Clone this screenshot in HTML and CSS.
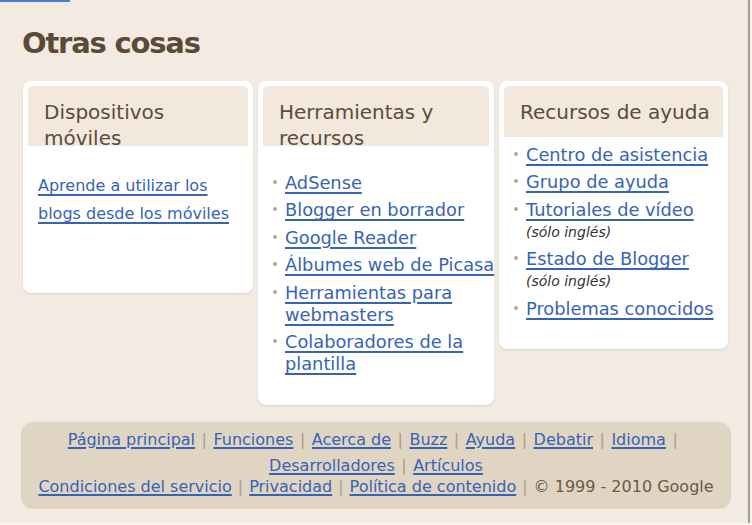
FILE: index.html
```html
<!DOCTYPE html>
<html lang="es">
<head>
<meta charset="utf-8">
<title>Otras cosas</title>
<link rel="stylesheet" href="styles.css">
</head>
<body>
<div class="page">
  <div class="topbar"></div>
  <h1 class="title">Otras cosas</h1>
  <div class="cards">
    <section class="card card-mobile">
      <h2 class="card-head two-line">Dispositivos móviles</h2>
      <div class="card-body body-mobile">
        <p class="mobile-text"><a href="#">Aprende a utilizar los blogs desde los móviles</a></p>
      </div>
    </section>
    <section class="card card-tools">
      <h2 class="card-head two-line">Herramientas y recursos</h2>
      <div class="card-body body-tools">
        <ul class="links">
          <li><a href="#">AdSense</a></li>
          <li><a href="#">Blogger en borrador</a></li>
          <li><a href="#">Google Reader</a></li>
          <li class="single"><a href="#">Álbumes web de Picasa</a></li>
          <li><a href="#">Herramientas para webmasters</a></li>
          <li><a href="#">Colaboradores de la plantilla</a></li>
        </ul>
      </div>
    </section>
    <section class="card card-help">
      <h2 class="card-head">Recursos de ayuda</h2>
      <div class="card-body body-help">
        <ul class="links">
          <li><a href="#">Centro de asistencia</a></li>
          <li><a href="#">Grupo de ayuda</a></li>
          <li><a href="#">Tutoriales de vídeo</a><span class="note">(sólo inglés)</span></li>
          <li><a href="#">Estado de Blogger</a><span class="note">(sólo inglés)</span></li>
          <li><a href="#">Problemas conocidos</a></li>
        </ul>
      </div>
    </section>
  </div>
  <footer class="footer">
    <div class="footer-nav">
      <a href="#">Página principal</a><span class="sep">|</span><a href="#">Funciones</a><span class="sep">|</span><a href="#">Acerca de</a><span class="sep">|</span><a href="#">Buzz</a><span class="sep">|</span><a href="#">Ayuda</a><span class="sep">|</span><a href="#">Debatir</a><span class="sep">|</span><a href="#">Idioma</a><span class="sep">|</span><br><a href="#">Desarrolladores</a><span class="sep">|</span><a href="#">Artículos</a>
    </div>
    <div class="footer-legal">
      <a href="#">Condiciones del servicio</a><span class="sep">|</span><a href="#">Privacidad</a><span class="sep">|</span><a href="#">Política de contenido</a><span class="sep">|</span><span class="copy">© 1999 - 2010 Google</span>
    </div>
  </footer>
</div>
</body>
</html>
```

FILE: styles.css
```css
html, body {
  margin: 0;
  padding: 0;
  background: #f8f4ef;
}

body {
  font-family: "DejaVu Sans", Verdana, sans-serif;
  color: #333;
}

.page {
  width: 748px;
  height: 523px;
  background: #f3ebe2;
  border-right: 2px solid #a49c91;
  overflow: hidden;
}

.topbar {
  width: 70px;
  height: 2px;
  background: #4a80d4;
}

.title {
  margin: 23px 0 0 22px;
  font-size: 29px;
  line-height: 36px;
  letter-spacing: -1.2px;
  font-weight: bold;
  color: #5b4a36;
}

.cards {
  display: flex;
  align-items: flex-start;
  gap: 5px;
  margin: 20px 0 0 23px;
}

.card {
  box-sizing: border-box;
  background: #fff;
  border-radius: 8px;
  padding: 5px 5px 0;
  box-shadow: 0 1px 2px rgba(120, 100, 80, 0.2);
}

.card-mobile { width: 230px; }
.card-tools { width: 236px; }
.card-help { width: 229px; }

.card-head {
  box-sizing: border-box;
  margin: 0;
  padding: 13px 8px 12px 16px;
  background: #f2e8dd;
  border-radius: 5px 5px 0 0;
  font-size: 20px;
  line-height: 26px;
  font-weight: normal;
  color: #5d4c3a;
}

.card-head.two-line {
  height: 60px;
  padding-bottom: 0;
}

.card-body {
  margin: 0 -5px;
}

.body-mobile { padding: 26.4px 8px 64.5px 15px; }
.body-tools { padding: 25.8px 0 29.7px 0; }
.body-help { padding: 6.8px 0 29.6px 0; }

.mobile-text {
  margin: 0;
  font-size: 16px;
  line-height: 28px;
}

a {
  color: #3763b5;
  text-decoration: underline;
  text-decoration-thickness: 2px;
  text-underline-offset: 3px;
}

.links {
  list-style: none;
  margin: 0;
  padding: 0 0 0 27px;
  font-size: 17.8px;
}

.links li {
  line-height: 22px;
  margin-top: 5.5px;
}

.links li.single { white-space: nowrap; }

.links li:first-child { margin-top: 0; }

.links li::before {
  content: "";
  display: inline-block;
  width: 4px;
  height: 4px;
  border-radius: 50%;
  background: #b3a591;
  margin-left: -12px;
  margin-right: 8px;
  vertical-align: 5px;
}

.note {
  display: block;
  font-size: 14px;
  line-height: 22px;
  font-style: italic;
  color: #333;
}

.footer {
  box-sizing: border-box;
  width: 710px;
  margin: 0 0 0 21px;
  padding: 4.9px 10px 12.25px;
  background: #e0d5c3;
  border-radius: 12px;
  text-align: center;
  font-size: 16px;
  color: #6b5a46;
}

.cards + .footer { margin-top: 17px; }

.footer a {
  text-decoration-thickness: 1.5px;
  text-underline-offset: 2px;
}

.footer-nav { line-height: 26.5px; }
.footer-legal { line-height: 20px; margin-top: -3.15px; }

.sep {
  color: #a99c8a;
  margin: 0 6.5px;
}

.footer-legal .sep { margin: 0 6px; }

.copy { color: #6b5a46; }
```
